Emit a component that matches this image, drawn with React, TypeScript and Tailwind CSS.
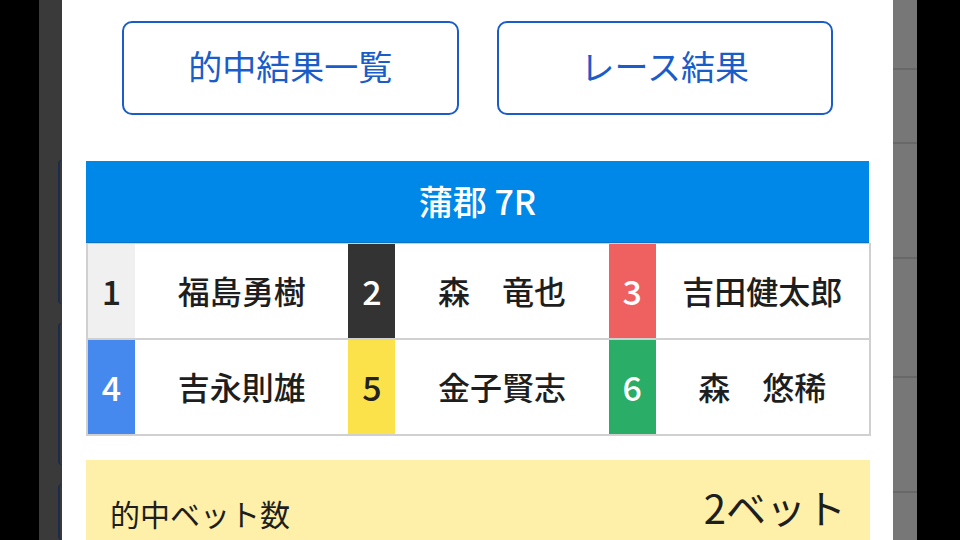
import React from "react";

const racers = [
  { n: "1", name: "福島勇樹", box: "bg-[#f0f0f0] text-[#222]" },
  { n: "2", name: "森　竜也", box: "bg-[#333333] text-white" },
  { n: "3", name: "吉田健太郎", box: "bg-[#ef6161] text-white" },
  { n: "4", name: "吉永則雄", box: "bg-[#4589ee] text-white" },
  { n: "5", name: "金子賢志", box: "bg-[#fbe24b] text-[#222]" },
  { n: "6", name: "森　悠稀", box: "bg-[#2aae67] text-white" },
];

const font = { fontFamily: '"Noto Sans CJK JP", "Noto Sans", sans-serif' };

export default function App() {
  return (
    <div className="w-[960px] h-[540px] flex overflow-hidden bg-black" style={font}>
      <div className="w-[39px] shrink-0 bg-black" />
      <div className="w-[23px] shrink-0 bg-[#3a3a3a] flex flex-col items-end gap-[19px] pt-[160px]">
        <div className="w-[4px] h-[153px] rounded-l-[6px] border-l-2 border-[#1b2b4c]" />
        <div className="w-[4px] h-[151px] rounded-l-[6px] border-l-2 border-[#1b2b4c]" />
        <div className="w-[4px] h-[60px] rounded-l-[6px] border-l-2 border-[#1b2b4c]" />
      </div>
      <div className="w-[831px] shrink-0 bg-white px-[24px] pt-[21px]">
        <div className="flex gap-[38px] px-[36px]">
          <div className="flex-1 h-[94px] border-2 border-[#1a5cc8] rounded-[10px] flex items-center justify-center pb-[6px] text-[#1a5cc8] text-[34px]">
            的中結果一覧
          </div>
          <div className="flex-1 h-[94px] border-2 border-[#1a5cc8] rounded-[10px] flex items-center justify-center pb-[6px] text-[#1a5cc8] text-[34px]">
            レース結果
          </div>
        </div>
        <div className="mt-[46px] h-[82px] bg-[#0088e8] border-b border-[#0a74c8] flex items-center justify-center pb-[3px] text-white text-[34px] font-medium">
          蒲郡 7R
        </div>
        <div className="w-[785px] border-2 border-t-[1px] border-[#d0d0d0] grid grid-cols-3 gap-y-[2px] bg-[#d0d0d0]">
          {racers.map((r) => (
            <div key={r.n} className="h-[94px] flex bg-white">
              <div className={`w-[47px] flex items-center justify-center pb-[2px] text-[34px] font-medium ${r.box}`}>{r.n}</div>
              <div className="flex-1 flex items-center justify-center pb-[3px] text-[32px] text-[#1e1e1e] font-medium">
                {r.name}
              </div>
            </div>
          ))}
        </div>
        <div className="mt-[24px] w-[784px] h-[100px] bg-[#fef0a8] px-[24px] pt-[19px] flex items-start justify-between text-[#1e1e1e]">
          <span className="text-[30px] leading-[56px] mt-[6px]">的中ベット数</span>
          <span className="text-[40px] leading-[56px]">2ベット</span>
        </div>
      </div>
      <div className="w-[24px] shrink-0 bg-[#777777] flex flex-col">
        <div className="h-[70px] border-b-2 border-[#686868]" />
        <div className="h-[74px] border-b-2 border-[#686868]" />
        <div className="h-[115px] border-b-2 border-[#686868]" />
        <div className="h-[119px] border-b-2 border-[#686868]" />
        <div className="h-[115px] border-b-2 border-[#686868]" />
      </div>
      <div className="flex-1 bg-black" />
    </div>
  );
}
